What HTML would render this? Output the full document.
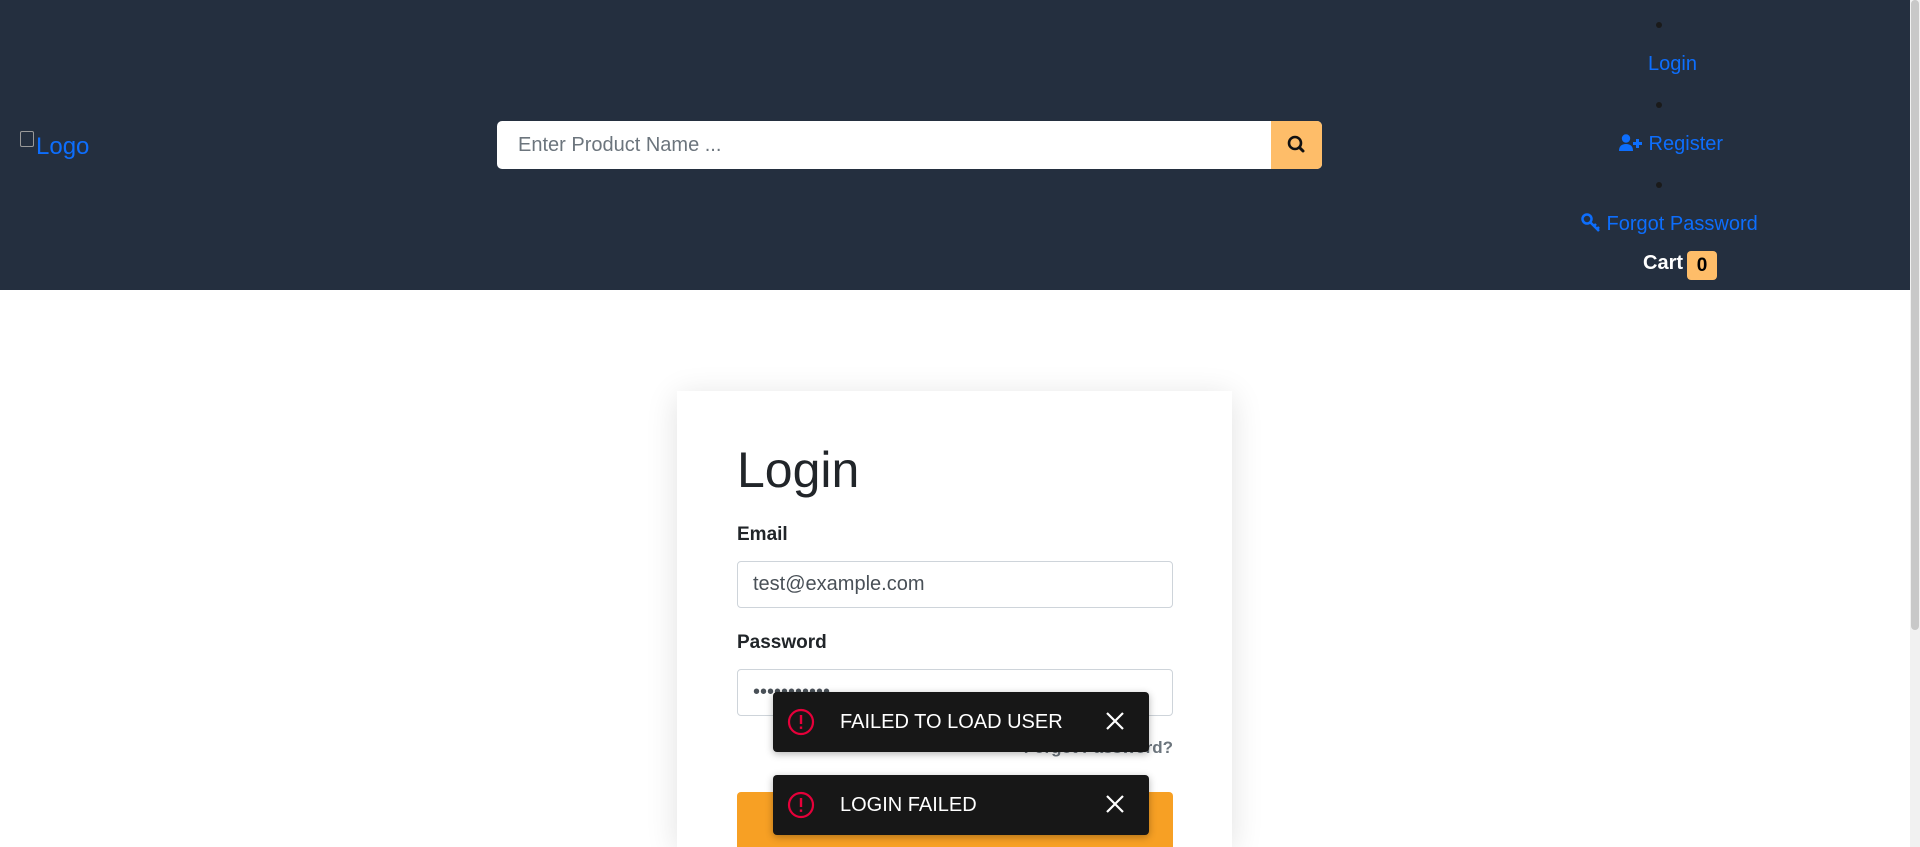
<!DOCTYPE html>
<html><head><meta charset="utf-8"><style>
*{box-sizing:border-box;margin:0;padding:0}
html,body{width:1920px;height:847px;overflow:hidden;background:#fff;font-family:"Liberation Sans",sans-serif;position:relative}
.hdr{position:absolute;left:0;top:0;width:1910px;height:290px;background:#242f3f}
.logo{position:absolute;left:20px;top:133px;color:#0d6efd;font-size:24px}
.logo i{display:inline-block;width:14px;height:16px;border:1px solid #999;border-radius:2px;vertical-align:top;margin-top:-2px;margin-right:2px}
.search{position:absolute;left:497px;top:121px;width:825px;height:48px;background:#fff;border-radius:5px}
.search span{position:absolute;left:21px;top:13px;font-size:20px;color:#6c757d}
.sbtn{position:absolute;right:0;top:0;width:51px;height:48px;background:#febd69;border-radius:0 5px 5px 0}
.dot{position:absolute;left:1656px;width:6px;height:6px;border-radius:50%;background:#1a1a1a}
.nav{position:absolute;color:#0d6efd;font-size:20px;white-space:nowrap}
.cart{position:absolute;left:1643px;top:252px;color:#fff;font-size:20px;font-weight:bold}
.badge{position:absolute;left:1687px;top:251px;width:30px;height:29px;background:#febd69;border-radius:4px;color:#000;font-size:19px;font-weight:bold;text-align:center;line-height:29px}
.sb{position:absolute;right:0;top:0;width:10px;height:847px;background:#f1f1f1}
.sb div{position:absolute;left:1px;top:0;width:8px;height:630px;background:#c8c8c8;border-radius:4px}
.card{position:absolute;left:677px;top:391px;width:555px;height:456px;background:#fff;box-shadow:0 5px 30px rgba(0,0,0,.12);overflow:hidden}
.t{position:absolute;left:60px;top:50px;font-size:50px;color:#212529}
.lbl{position:absolute;left:60px;font-size:19px;font-weight:bold;color:#212529}
.inp{position:absolute;left:60px;width:436px;height:47px;border:1px solid #ced4da;border-radius:4px;font-size:20px;color:#495057;padding:11px 15px}
.fp{position:absolute;right:59px;top:347px;font-size:17px;font-weight:bold;color:#6c757d}
.btn{position:absolute;left:60px;top:401px;width:436px;height:80px;background:#f7a024;border-radius:4px}
.toast{position:absolute;left:773px;width:376px;height:60px;background:#171717;border-radius:4px;box-shadow:0 2px 8px rgba(0,0,0,.3);color:#fff;font-size:20px}
.toast svg{position:absolute;left:14px;top:16px}
.toast span{position:absolute;left:67px;top:19px}
.toast .x{position:absolute;left:330px;top:17px}
</style></head><body>
<div class="hdr">
<div class="logo"><i></i>Logo</div>
<div class="search"><span>Enter Product Name ...</span><div class="sbtn"><svg width="51" height="48" viewBox="0 0 51 48"><circle cx="24" cy="22" r="6" fill="none" stroke="#111" stroke-width="2.6"/><line x1="28.5" y1="26.5" x2="32" y2="30" stroke="#111" stroke-width="3" stroke-linecap="round"/></svg></div></div>
<div class="dot" style="top:22px"></div>
<div class="dot" style="top:102px"></div>
<div class="dot" style="top:182px"></div>
<div class="nav" style="left:1648px;top:53px">Login</div>
<div class="nav" style="left:1619px;top:133px"><svg width="24" height="18" viewBox="0 0 24 18" style="vertical-align:-2px"><circle cx="7" cy="4.5" r="4.2" fill="#0d6efd"/><path d="M0 17 Q0 10 7 10 Q14 10 14 17Z" fill="#0d6efd"/><rect x="14" y="8" width="9" height="3" fill="#0d6efd"/><rect x="17" y="5" width="3" height="9" fill="#0d6efd"/></svg> Register</div>
<div class="nav" style="left:1581px;top:213px"><svg width="20" height="20" viewBox="0 0 20 20" style="vertical-align:-3px"><circle cx="6" cy="6" r="4.5" fill="none" stroke="#0d6efd" stroke-width="2.5"/><path d="M9 9 L18 18 M13 13 L15 11 M16 16 L18 14" stroke="#0d6efd" stroke-width="2.5"/></svg> Forgot Password</div>
<div class="cart">Cart</div>
<div class="badge">0</div>
</div>
<div class="sb"><div></div></div>
<div class="card">
<div class="t">Login</div>
<div class="lbl" style="top:133px">Email</div>
<div class="inp" style="top:170px">test@example.com</div>
<div class="lbl" style="top:241px">Password</div>
<div class="inp" style="top:278px">•••••••••••</div>
<div class="fp">Forgot Password?</div>
<div class="btn"></div>
</div>
<div class="toast" style="top:692px"><svg width="28" height="28" viewBox="0 0 28 28"><circle cx="14" cy="14" r="12" fill="none" stroke="#e6003a" stroke-width="2.2"/><rect x="12.8" y="7" width="2.4" height="9" fill="#e6003a"/><rect x="12.8" y="18.5" width="2.4" height="2.4" fill="#e6003a"/></svg><span>FAILED TO LOAD USER</span><svg class="x" width="24" height="24" viewBox="0 0 24 24"><path d="M4 4L20 20M20 4L4 20" stroke="#fff" stroke-width="2.2"/></svg></div>
<div class="toast" style="top:775px"><svg width="28" height="28" viewBox="0 0 28 28"><circle cx="14" cy="14" r="12" fill="none" stroke="#e6003a" stroke-width="2.2"/><rect x="12.8" y="7" width="2.4" height="9" fill="#e6003a"/><rect x="12.8" y="18.5" width="2.4" height="2.4" fill="#e6003a"/></svg><span>LOGIN FAILED</span><svg class="x" width="24" height="24" viewBox="0 0 24 24"><path d="M4 4L20 20M20 4L4 20" stroke="#fff" stroke-width="2.2"/></svg></div>
</body></html>
